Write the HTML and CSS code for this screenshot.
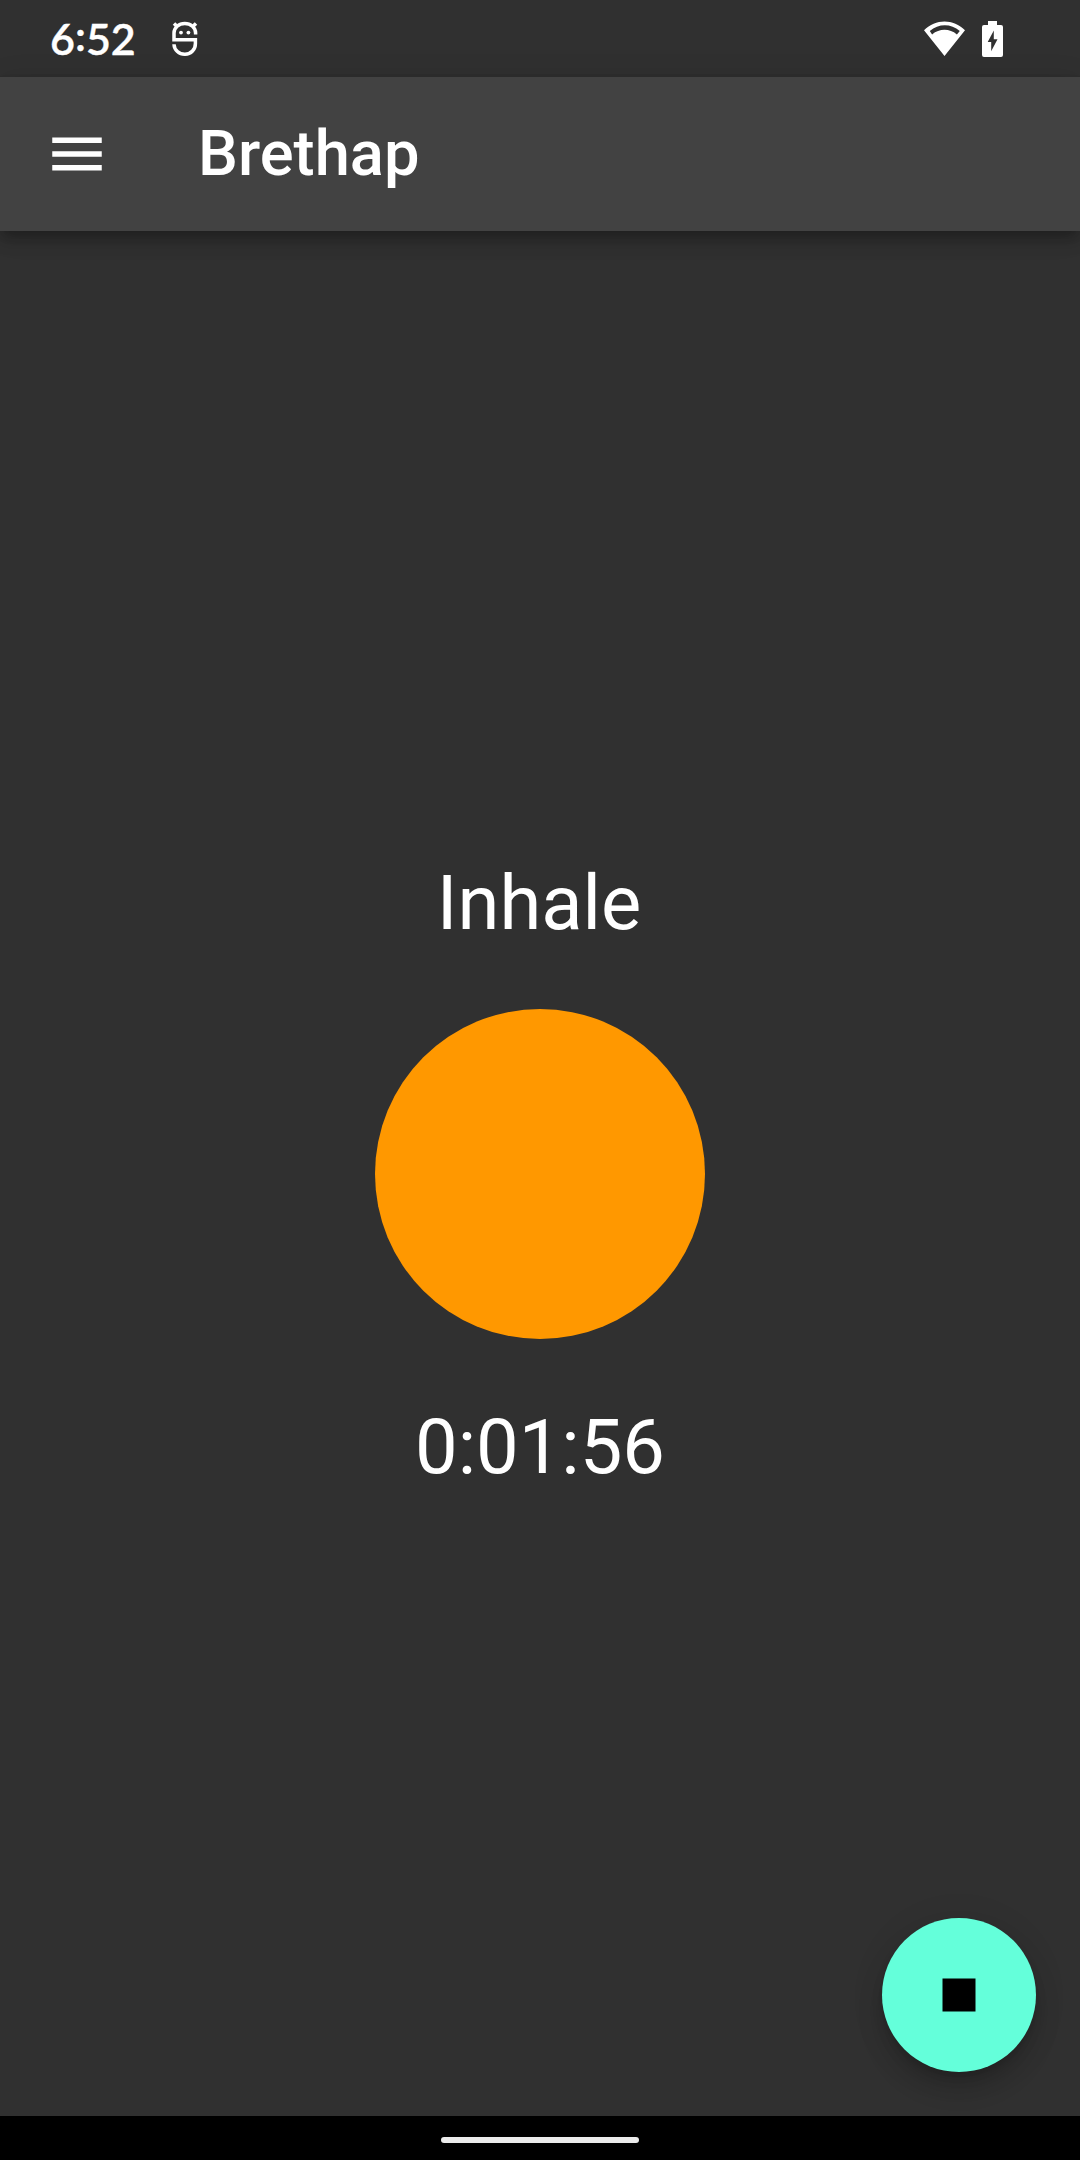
FILE: index.html
```html
<!DOCTYPE html>
<html lang="en">
<head>
<meta charset="utf-8">
<title>Brethap</title>
<link rel="stylesheet" href="styles.css">
</head>
<body>
<div class="screen">
  <header class="status-bar">
    <span class="clock">6<span class="colon">:</span>52</span>
    <svg class="notification" viewBox="0 0 26 36" fill="none" stroke="#fff" stroke-width="3.500">
      <path d="M23.600 13.600V12A10.800 9.500 0 0 0 2 12V18.700H23.400V22.500A10.700 10.500 0 0 1 2 23.200"/>
      <path d="M5.200 5.600L2 2.400M20.800 5.600L24 2.400"/>
      <circle cx="9" cy="11.600" r="1.900" fill="#fff" stroke="none"/>
      <circle cx="16.400" cy="11.600" r="1.900" fill="#fff" stroke="none"/>
    </svg>
    <div class="system-icons">
      <svg class="wifi" viewBox="0 0 41 35">
        <path fill="#fff" fill-rule="evenodd" d="M0 9.300C11.500-2.600 29.500-2.600 41 9.300L20.500 35ZM5.800 10L8.100 13.500C15.500 7.300 25.500 7.300 32.900 13.500L35.800 10C27 2.300 14.600 2.300 5.800 10Z"/>
      </svg>
      <svg class="battery" viewBox="0 0 21 36">
        <path fill="#fff" fill-rule="evenodd" d="M6 0H15V4H19Q21 4 21 6V34Q21 36 19 36H2Q0 36 0 34V6Q0 4 2 4H6ZM11.800 9.500L5.700 21H9.200V30.200L15.500 18.200H11.800Z"/>
      </svg>
    </div>
  </header>
  <div class="app-bar">
    <svg class="menu" viewBox="0 0 24 24"><path fill="#fff" d="M3 18h18v-2H3v2zm0-5h18v-2H3v2zm0-7v2h18V6H3z"/></svg>
    <h1 class="title">Brethap</h1>
  </div>
  <main class="content">
    <div class="phase">Inhale</div>
    <div class="breath"></div>
    <div class="timer">0:01:56</div>
    <button class="fab" aria-label="Stop">
      <svg class="stop" viewBox="0 0 24 24"><path d="M6 6h12v12H6z"/></svg>
    </button>
  </main>
  <footer class="nav-bar"><div class="handle"></div></footer>
</div>
</body>
</html>
```

FILE: styles.css
```css
* { box-sizing: border-box; }
body { margin: 0; background: #303030; color: #fff; font-family: Roboto, sans-serif; }
svg { display: block; flex: none; }
.screen { display: flex; flex-direction: column; width: 1080px; height: 2160px; overflow: hidden; }
.status-bar { display: flex; height: 77px; padding: 0 77px 0 50px; background: #303030; }
.clock { width: 122px; padding-top: 13px; font: 600 43px/52px Lato, sans-serif; -webkit-text-stroke: .4px #fff; }
.colon { display: inline-block; transform: translateY(-4px); }
.notification { width: 26px; height: 36px; margin-top: 21px; }
.system-icons { display: flex; gap: 17px; margin: 21px 0 0 auto; }
.wifi { width: 41px; height: 35px; }
.battery { width: 21px; height: 36px; }
.app-bar { display: flex; align-items: center; position: relative; height: 154px; padding: 0 44px; gap: 88px; background: #424242; box-shadow: 0 5px 11px -3px rgba(0,0,0,.2), 0 11px 14px rgba(0,0,0,.14), 0 3px 27px rgba(0,0,0,.12); }
.menu { width: 66px; height: 66px; }
.title { margin: 0 0 2px; font-size: 63.25px; font-weight: 500; line-height: 74px; }
.content { display: flex; flex: 1; flex-direction: column; align-items: center; justify-content: center; position: relative; padding-top: 4px; font-size: 75.9px; line-height: 89px; }
.phase { padding-right: 2px; }
.breath { width: 330px; height: 330px; margin: 60.5px 0 64.5px; border-radius: 50%; background: #ff9800; }
.fab { position: absolute; right: 44px; bottom: 44px; display: grid; place-items: center; width: 154px; height: 154px; padding: 0; border: 0; border-radius: 50%; background: #64ffda; box-shadow: 0 8px 14px -3px rgba(0,0,0,.16), 0 16px 27px rgba(0,0,0,.14), 0 3px 40px rgba(0,0,0,.06); }
.stop { width: 66px; height: 66px; }
.nav-bar { display: grid; place-items: center; height: 44px; padding-top: 4px; background: #000; }
.handle { width: 198px; height: 6px; border-radius: 3px; background: #ebebeb; }
```
